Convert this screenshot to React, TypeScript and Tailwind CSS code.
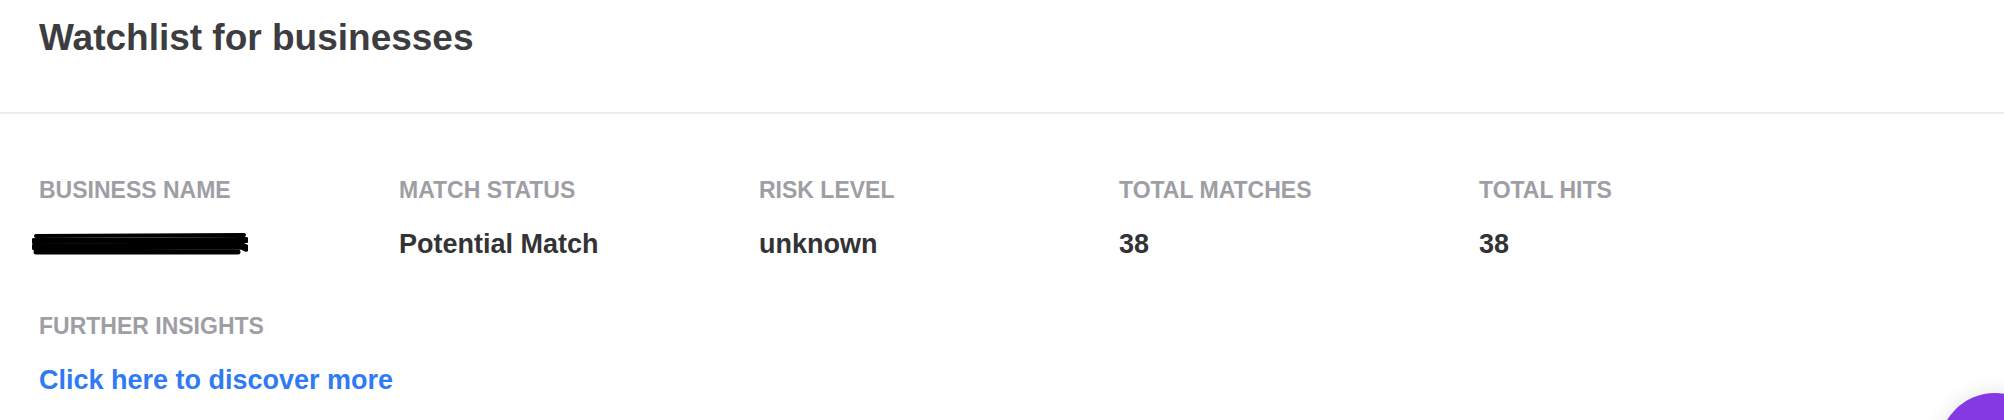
import React from "react";

const columns = [
  { label: "BUSINESS NAME", value: null },
  { label: "MATCH STATUS", value: "Potential Match" },
  { label: "RISK LEVEL", value: "unknown" },
  { label: "TOTAL MATCHES", value: "38" },
  { label: "TOTAL HITS", value: "38" },
];

function Redacted() {
  // scribbled-over business name
  return (
    <svg width="216" height="26" viewBox="0 0 216 26" className="block">
      <path d="M4 5 L212 4" stroke="#000" strokeWidth="4" strokeLinecap="round" />
      <path d="M2 10 L214 9" stroke="#000" strokeWidth="6" strokeLinecap="round" />
      <path d="M3 16 L210 15 L214 17" stroke="#000" strokeWidth="7" strokeLinecap="round" />
      <path d="M4 21 L206 21" stroke="#000" strokeWidth="5" strokeLinecap="round" />
    </svg>
  );
}

export default function App() {
  return (
    <div className="relative w-[2004px] h-[420px] bg-white overflow-hidden font-['Liberation_Sans',Arial,sans-serif]">
      {/* ── Header ── */}
      <header className="h-[114px] border-b-2 border-[#ebebf0] px-[39px] pt-[16px]">
        <h1 className="text-[37px] leading-[44px] font-bold text-[#3d3d41]">Watchlist for businesses</h1>
      </header>

      {/* ── Details ── */}
      <main className="px-[39px] pt-[62px]">
        <div className="flex">
          {columns.map((c) => (
            <div key={c.label} className="w-[360px] flex flex-col">
              <span className="text-[23px] leading-[28px] font-bold text-[#9e9ea5]">{c.label}</span>
              <div className="mt-[24px] h-[32px] flex items-center">
                {c.value ? (
                  <span className="text-[27px] leading-[32px] font-semibold text-[#333336]">{c.value}</span>
                ) : (
                  <div className="-ml-[7px]">
                    <Redacted />
                  </div>
                )}
              </div>
            </div>
          ))}
        </div>

        <div className="mt-[52px] flex flex-col">
          <span className="text-[23px] leading-[28px] font-bold text-[#9e9ea5]">FURTHER INSIGHTS</span>
          <a href="#" className="mt-[24px] text-[27px] leading-[32px] font-semibold text-[#2f7bf5]">
            Click here to discover more
          </a>
        </div>
      </main>

      {/* chat launcher */}
      <div className="absolute left-[1939px] top-[393px] w-[112px] h-[112px] rounded-full bg-[#8439e3] shadow-[0_0_16px_4px_rgba(0,0,0,0.08)]" />
    </div>
  );
}
